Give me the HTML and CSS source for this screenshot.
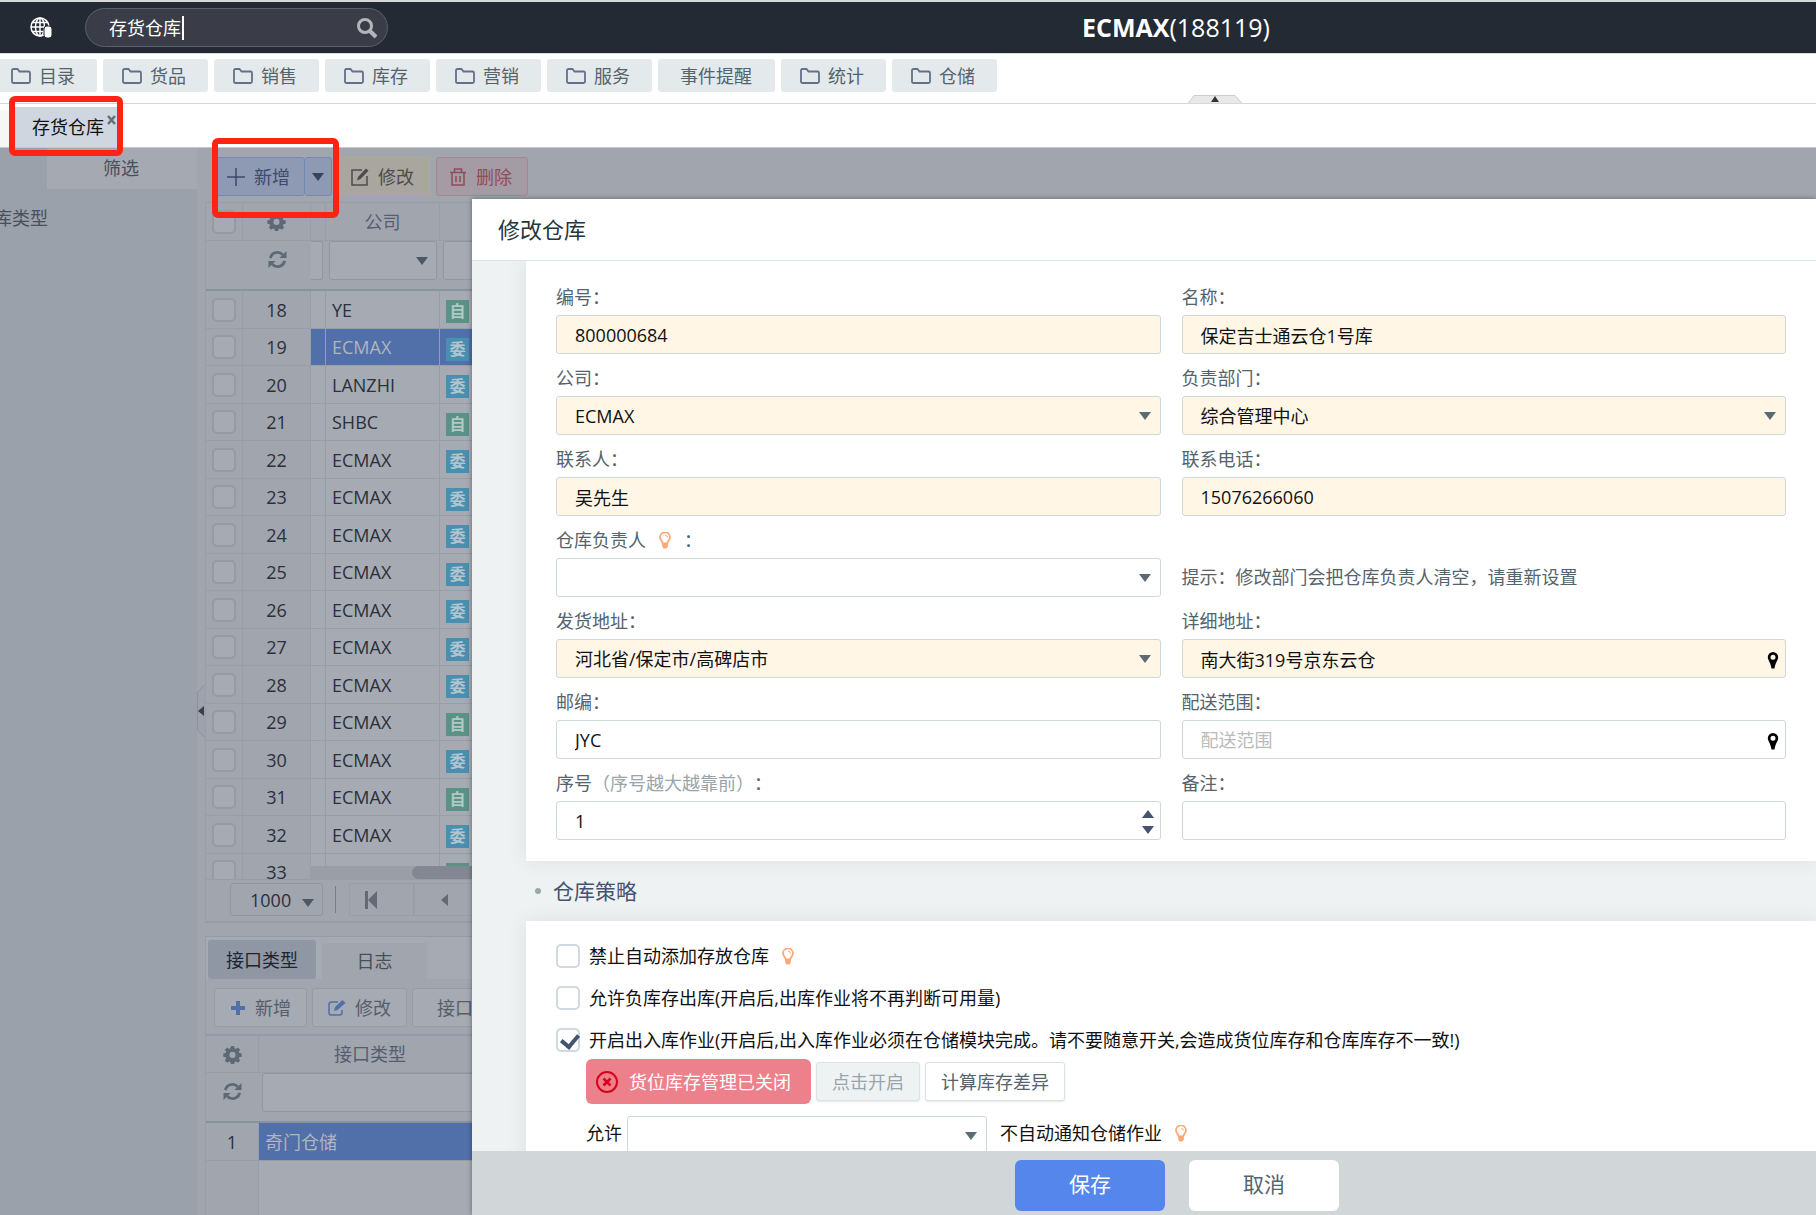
FILE: index.html
```html
<!DOCTYPE html>
<html lang="zh-CN">
<head>
	<meta charset="utf-8">
	<title>存货仓库</title>
	<link rel="stylesheet" href="styles.css">
</head>
<body>
<svg class="sprite" aria-hidden="true">
	<symbol id="i-folder" viewBox="0 0 20 16"><path d="M1 13V2.5Q1 1 2.500 1H6.500L8.500 3.500H17.500Q19 3.500 19 5V13.500Q19 15 17.500 15H2.500Q1 15 1 13.500Z" fill="none" stroke="currentColor" stroke-width="1.800"/></symbol>
	<symbol id="i-gear" viewBox="0 0 20 20"><path fill="currentColor" fill-rule="evenodd" d="M8.300 1h3.400l.5 2.500 1.400.6 2.100-1.500 2.400 2.400-1.500 2.100.6 1.400 2.500.5v3.400l-2.500.5-.6 1.400 1.500 2.100-2.400 2.400-2.100-1.500-1.400.6-.5 2.500H8.300l-.5-2.500-1.400-.6-2.100 1.500-2.400-2.400 1.500-2.100-.6-1.400L.300 12.400V9l2.500-.5.6-1.400L1.900 5l2.400-2.400 2.100 1.500 1.400-.6zM10 7.200a3.200 3.200 0 1 0 0 6.400 3.200 3.200 0 0 0 0-6.400z"/></symbol>
	<symbol id="i-refresh" viewBox="0 0 20 20"><path d="M2.500 8.500A7.600 7.600 0 0 1 15.500 5M17.500 11.500A7.600 7.600 0 0 1 4.500 15" fill="none" stroke="currentColor" stroke-width="3"/><path d="M19.500 1v7.500H12zM.500 19v-7.500H8z" fill="currentColor"/></symbol>
	<symbol id="i-bulb" viewBox="0 0 12 17"><path d="M3.800 11.500C3.800 9 1 8.500 1 5.300A4.700 4.700 0 0 1 11 5.300C11 8.500 8.200 9 8.200 11.500Z" fill="none" stroke="currentColor" stroke-width="1.800"/><path d="M3.200 11h5.600v3.500L7.500 16.500h-3L3.200 14.500z" fill="currentColor"/><path d="M6 3.200Q8.300 3.400 8.500 5.500" fill="none" stroke="currentColor"/></symbol>
	<symbol id="i-pin" viewBox="0 0 12 18"><path fill-rule="evenodd" d="M6 1a5.200 5.200 0 0 1 5.200 5.200C11.200 9 8.500 11 7.500 17.500h-3C3.500 11 .8 9 .8 6.200A5.200 5.200 0 0 1 6 1zm0 2.700a2.500 2.500 0 1 0 0 5 2.500 2.500 0 0 0 0-5z"/></symbol>
</svg>

<header class="top">
	<svg class="globe" viewBox="0 0 22 21" width="22" height="21"><g fill="none" stroke="#fff" stroke-width="1.500"><circle cx="10" cy="10" r="9"/><ellipse cx="10" cy="10" rx="4.500" ry="9"/><path d="M10 1v18M1 10h18M2.500 5.500h15M2.500 14.500h15"/></g><rect x="14" y="9" width="8" height="12" rx="3" fill="#fff" stroke="#232a33"/></svg>
	<div class="search">
		<input type="text" aria-label="搜索" value="存货仓库">
		<i class="caret"></i>
		<button type="button" aria-label="搜索"><svg viewBox="0 0 22 22" width="22" height="22"><circle cx="9" cy="9" r="6.500" fill="none" stroke="currentColor" stroke-width="3"/><path d="M14 14l6 6" stroke="currentColor" stroke-width="4"/></svg></button>
	</div>
	<h1><b>ECMAX</b>(188119)</h1>
</header>

<nav class="menu">
	<button type="button"><svg><use href="#i-folder"/></svg>目录</button>
	<button type="button"><svg><use href="#i-folder"/></svg>货品</button>
	<button type="button"><svg><use href="#i-folder"/></svg>销售</button>
	<button type="button"><svg><use href="#i-folder"/></svg>库存</button>
	<button type="button"><svg><use href="#i-folder"/></svg>营销</button>
	<button type="button"><svg><use href="#i-folder"/></svg>服务</button>
	<button type="button" class="plain">事件提醒</button>
	<button type="button"><svg><use href="#i-folder"/></svg>统计</button>
	<button type="button"><svg><use href="#i-folder"/></svg>仓储</button>
	<svg class="fold" viewBox="0 0 54 8" width="54" height="8"><path d="M.5 8L6 .5h41L53.500 8" fill="#e8e8e8" stroke="#ccc"/><path d="M23 7l4-6 4 6z" fill="#333"/></svg>
</nav>

<div class="tabs">
	<span class="tab-prev"></span>
	<div class="tab on">存货仓库<button type="button" class="close" aria-label="关闭"><svg viewBox="0 0 9 10" width="9" height="10"><path d="M1 1l7 8M8 1L1 9" stroke="#666f76" stroke-width="2.500"/></svg></button></div>
</div>

<div class="work">
	<aside class="side">
		<div class="side-tab">筛选</div>
		<p class="side-type">库类型</p>
	</aside>
	<div class="split"><svg viewBox="0 0 8 54" width="8" height="54"><path d="M8 .5L.5 8v38L8 53.500" fill="#9da2ab" stroke="#8b919a"/><path d="M7 22v10l-6-5z" fill="#3a4048"/></svg></div>
	<main class="main">
		<div class="tools">
			<div class="btn-group">
				<button type="button" class="btn add"><svg viewBox="0 0 18 18"><path d="M9 0v18M0 9h18" stroke="currentColor" stroke-width="1.500"/></svg>新增</button>
				<button type="button" class="btn add more" aria-label="更多"></button>
			</div>
			<button type="button" class="btn edit"><svg viewBox="0 0 18 18"><path d="M11 2H1v15h15V8" fill="none" stroke="currentColor" stroke-width="1.500"/><path d="M6 12.500L7 9l8-8.500 2.500 2.300L9.500 11z" fill="currentColor"/></svg>修改</button>
			<button type="button" class="btn del"><svg viewBox="0 0 18 18"><path d="M1 4.500h16M5.500 4V1h7v3M3 4.500V17h12V4.500M7 8v6M11 8v6" fill="none" stroke="currentColor" stroke-width="1.500"/></svg>删除</button>
		</div>

		<section class="grid">
			<div class="grid-view">
				<table class="list">
					<colgroup><col class="c-chk"><col class="c-num"><col class="c-gap"><col class="c-com"><col></colgroup>
					<thead>
						<tr class="names">
							<th><input type="checkbox" class="chk" aria-label="全选"></th>
							<th><svg class="ico"><use href="#i-gear"/></svg></th>
							<th></th>
							<th>公司</th>
							<th></th>
						</tr>
						<tr class="filters">
							<th></th>
							<th><svg class="ico"><use href="#i-refresh"/></svg></th>
							<th class="cut"><input type="text" aria-label="筛选"></th>
							<th><span class="pick"><select aria-label="公司"><option></option></select></span></th>
							<th><input type="text" aria-label="类型"></th>
						</tr>
					</thead>
					<tbody id="rows"></tbody>
				</table>
				<div class="hbar"><i></i></div>
			</div>
			<div class="pager">
				<span class="pick size"><select aria-label="每页条数"><option>1000</option></select></span>
				<i class="sep"></i>
				<button type="button" aria-label="首页"><svg viewBox="0 0 14 20" width="14" height="20"><path d="M1 1h3v18H1zM13 1v18L4 10z" fill="currentColor"/></svg></button>
				<button type="button" class="prev" aria-label="上一页"><svg viewBox="0 0 14 20" width="14" height="20"><path d="M12 4v12L5 10z" fill="currentColor"/></svg></button>
			</div>
		</section>

		<section class="sub">
			<div class="sub-tabs">
				<button type="button" class="on">接口类型</button>
				<button type="button">日志</button>
			</div>
			<div class="sub-tools">
				<button type="button"><svg viewBox="0 0 18 18"><path d="M9 2v14M2 9h14" stroke="currentColor" stroke-width="4"/></svg>新增</button>
				<button type="button"><svg class="pen" viewBox="0 0 18 18"><path d="M10 3H3.500Q1 3 1 5.500v8Q1 16 3.500 16h8q2.500 0 2.500-2.500V11" fill="none" stroke="currentColor" stroke-width="1.500"/><path d="M6 12l1-4 7.500-7 3 3-8 7z" fill="currentColor"/></svg>修改</button>
				<button type="button" class="wide">接口配置</button>
			</div>
			<table class="list types">
				<colgroup><col class="c-idx"><col class="c-type"><col></colgroup>
				<thead>
					<tr class="names">
						<th><svg class="ico"><use href="#i-gear"/></svg></th>
						<th>接口类型</th>
						<th></th>
					</tr>
					<tr class="filters">
						<th><svg class="ico"><use href="#i-refresh"/></svg></th>
						<th><input type="text" aria-label="接口类型"></th>
						<th></th>
					</tr>
				</thead>
				<tbody>
					<tr class="sel"><td>1</td><td>奇门仓储</td><td></td></tr>
					<tr class="rest"><td></td><td></td><td></td></tr>
				</tbody>
			</table>
		</section>
	</main>
</div>

<!-- 修改仓库 弹窗 -->
<form class="dialog" role="dialog" aria-labelledby="dlg-title">
	<h2 class="dlg-title" id="dlg-title">修改仓库</h2>
	<div class="dlg-con">
		<div class="card fields">
			<div class="field">
				<label for="code">编号：</label>
				<input type="text" id="code" class="must" value="800000684">
			</div>
			<div class="field">
				<label for="name">名称：</label>
				<input type="text" id="name" class="must" value="保定吉士通云仓1号库">
			</div>
			<div class="field">
				<label for="company">公司：</label>
				<span class="pick"><select id="company" class="must"><option>ECMAX</option></select></span>
			</div>
			<div class="field">
				<label for="dept">负责部门：</label>
				<span class="pick"><select id="dept" class="must"><option>综合管理中心</option></select></span>
			</div>
			<div class="field">
				<label for="contact">联系人：</label>
				<input type="text" id="contact" class="must" value="吴先生">
			</div>
			<div class="field">
				<label for="phone">联系电话：</label>
				<input type="text" id="phone" class="must" value="15076266060">
			</div>
			<div class="field">
				<label for="owner">仓库负责人<svg class="bulb"><use href="#i-bulb"/></svg>：</label>
				<span class="pick"><select id="owner"><option></option></select></span>
			</div>
			<div class="field">
				<p class="tip">提示：修改部门会把仓库负责人清空，请重新设置</p>
			</div>
			<div class="field">
				<label for="area">发货地址：</label>
				<span class="pick"><select id="area" class="must"><option>河北省/保定市/高碑店市</option></select></span>
			</div>
			<div class="field">
				<label for="addr">详细地址：</label>
				<span class="pin"><input type="text" id="addr" class="must" value="南大街319号京东云仓"><svg><use href="#i-pin"/></svg></span>
			</div>
			<div class="field">
				<label for="zip">邮编：</label>
				<input type="text" id="zip" value="JYC">
			</div>
			<div class="field">
				<label for="range">配送范围：</label>
				<span class="pin"><input type="text" id="range" placeholder="配送范围"><svg><use href="#i-pin"/></svg></span>
			</div>
			<div class="field">
				<label for="sort">序号<em>（序号越大越靠前）</em>：</label>
				<span class="spin"><input type="number" id="sort" value="1"></span>
			</div>
			<div class="field">
				<label for="memo">备注：</label>
				<input type="text" id="memo">
			</div>
		</div>

		<h3 class="group">仓库策略</h3>

		<div class="card policy">
			<label class="opt"><input type="checkbox" class="chk">禁止自动添加存放仓库<svg class="bulb"><use href="#i-bulb"/></svg></label>
			<label class="opt"><input type="checkbox" class="chk">允许负库存出库(开启后,出库作业将不再判断可用量)</label>
			<label class="opt"><input type="checkbox" class="chk" checked>开启出入库作业(开启后,出入库作业必须在仓储模块完成。请不要随意开关,会造成货位库存和仓库库存不一致!)</label>
			<div class="acts">
				<span class="closed"><svg viewBox="0 0 22 22" width="22" height="22"><circle cx="11" cy="11" r="10" fill="none" stroke="currentColor" stroke-width="2"/><path d="M7.500 7.500l7 7M14.500 7.500l-7 7" stroke="currentColor" stroke-width="2.500"/></svg>货位库存管理已关闭</span>
				<button type="button" disabled>点击开启</button>
				<button type="button">计算库存差异</button>
			</div>
			<div class="allow">
				<label for="allow">允许</label>
				<span class="pick"><select id="allow"><option></option></select></span>
				<span>不自动通知仓储作业</span><svg class="bulb"><use href="#i-bulb"/></svg>
			</div>
		</div>
	</div>
	<div class="dlg-foot">
		<button type="submit" class="ok">保存</button>
		<button type="button">取消</button>
	</div>
</form>

<i class="mark mark-tab"></i>
<i class="mark mark-add"></i>

<script>
	// 仓库列表：公司 + 类型（自营 / 委外）
	var data = [
		['YE','自'],['ECMAX','委'],['LANZHI','委'],['SHBC','自'],['ECMAX','委'],['ECMAX','委'],
		['ECMAX','委'],['ECMAX','委'],['ECMAX','委'],['ECMAX','委'],['ECMAX','委'],['ECMAX','自'],
		['ECMAX','委'],['ECMAX','自'],['ECMAX','委'],['','自']
	];
	var arr = [];
	for(var i=0;i<data.length;i++){
		var no = i + 18;
		arr.push(`
			<tr class="${no === 19 ? 'sel':''}">
				<td><input type="checkbox" class="chk" aria-label="选择${no}"></td>
				<td>${no}</td>
				<td></td>
				<td>${data[i][0]}</td>
				<td><span class="badge ${data[i][1] === '自' ? 'own':''}">${data[i][1]}</span></td>
			</tr>
		`);
	}
	document.getElementById('rows').innerHTML = arr.join('');
</script>
</body>
</html>
```
FILE: styles.css
```css
*{
	box-sizing: border-box;
}
body{
	margin: 0;
	height: 100vh;
	display: flex;
	flex-direction: column;
	overflow: hidden;
	position: relative;
	background: #fff;
	color: #55636b;
	font: 18px/24px "Open Sans","Noto Sans CJK SC",sans-serif;
}
h1,h2,h3,p{
	margin: 0;
	font-weight: normal;
}
button,input,select{
	font: inherit;
	color: inherit;
	margin: 0;
	padding: 0;
	outline: none;
}
button{
	border: 0;
	background: none;
	white-space: nowrap;
}
svg{
	display: block;
	flex: none;
}
em,i{
	font-style: normal;
}
.sprite{
	position: absolute;
	width: 0;
	height: 0;
}

/* 顶部 */
.top{
	display: flex;
	align-items: center;
	height: 54px;
	flex: none;
	padding-left: 30px;
	border-top: 2px solid #d6dadb;
	border-bottom: 1px solid #d5dde0;
	background: #232a33;
	color: #fff;
}
.search{
	display: flex;
	align-items: center;
	width: 303px;
	height: 39px;
	margin-left: 33px;
	padding: 0 9px 0 23px;
	border: 1px solid #5a6070;
	border-radius: 20px;
	background: #3a3d48;
}
.search input{
	width: 73px;
	border: 0;
	background: none;
}
.caret{
	width: 2px;
	height: 24px;
	background: #fff;
}
.search button{
	margin-left: auto;
	color: #b3b5b9;
}
.top h1{
	margin-left: 694px;
	padding-bottom: 2px;
	font-size: 25px;
}

/* 菜单 */
.menu{
	display: flex;
	gap: 6px;
	flex: none;
	height: 50px;
	padding-top: 5px;
	margin-left: -8px;
	border-bottom: 1px solid #cfdada;
	position: relative;
}
.menu button{
	display: flex;
	align-items: center;
	gap: 8px;
	height: 33px;
	padding: 0 22px 0 19px;
	border-radius: 3px;
	background: #e4e9eb;
}
.menu button svg{
	width: 20px;
	height: 16px;
	color: #64708a;
}
.menu .plain{
	padding: 0 23px 0 22px;
}
.fold{
	position: absolute;
	left: 1196px;
	bottom: 0;
}

/* 标签页 */
.tabs{
	display: flex;
	align-items: flex-end;
	gap: 5px;
	flex: none;
	height: 44px;
	border-bottom: 1px solid #c3c8cc;
}
.tab-prev{
	width: 9px;
	height: 37px;
	background: #f5f7f7;
}
.tab{
	display: flex;
	height: 40px;
	padding: 0 2px 0 18px;
	line-height: 40px;
	background: #cfd6e0;
	color: #111;
}
.close{
	align-self: flex-start;
	margin: 8px 0 0 3px;
}

/* 工作区 */
.work{
	display: flex;
	flex: 1;
	min-height: 0;
	background: #a1a5ae;
}
.side{
	flex: none;
	width: 197px;
	overflow: hidden;
	background: #9aa1aa;
	color: #48505b;
}
.side-tab{
	height: 41px;
	margin-left: 47px;
	padding-right: 2px;
	line-height: 40px;
	text-align: center;
	background: #a5a9b2;
}
.side-type{
	margin: 17px 0 0 -6px;
}
.split{
	display: flex;
	align-items: center;
	flex: none;
	width: 8px;
	padding-top: 58px;
}
.main{
	display: flex;
	flex-direction: column;
	flex: 1;
	min-width: 0;
}
.tools{
	display: flex;
	gap: 6px;
	height: 54px;
	flex: none;
	padding: 9px 0 0 10px;
}
.btn-group{
	display: flex;
}
.btn{
	display: flex;
	align-items: center;
	gap: 9px;
	height: 39px;
	padding: 0 15px 0 12px;
	border: 1px solid;
	border-radius: 3px;
}
.btn svg{
	width: 18px;
	height: 18px;
}
.add{
	padding: 0 14px 0 11px;
	border-color: #7588b4;
	background: #8e99b3;
	color: #3c4a6c;
}
.more{
	width: 27px;
	padding: 0 7px;
	border-left: 0;
}
.more::after{
	content: "";
	border: 6px solid transparent;
	border-top: 8px solid #39435a;
	border-bottom: 0;
}
.edit{
	border-color: #b1a98b;
	background: #a8a69f;
	color: #4c4b4e;
}
.del{
	border-color: #a8868f;
	background: #a59ba4;
	color: #8f4c5b;
}

/* 表格 */
.grid{
	display: flex;
	flex-direction: column;
	flex: 1;
	min-height: 0;
	border: 1px solid #979ea9;
	border-width: 1px 0 2px 1px;
}
.grid-view{
	flex: 1;
	min-height: 0;
	overflow: hidden;
	position: relative;
}
.list{
	width: 100%;
	table-layout: fixed;
	border-collapse: separate;
	border-spacing: 0;
}
.c-chk{
	width: 37px;
}
.c-num{
	width: 68px;
}
.c-gap{
	width: 15px;
}
.c-com{
	width: 114px;
}
.list th,.list td{
	padding: 0;
	border: 1px solid #979ea9;
	border-width: 0 1px 1px 0;
	font-weight: normal;
}
.names th{
	height: 38px;
	color: #555d70;
}
.types .names th{
	height: 37px;
}
.filters th{
	height: 50px;
	padding: 0 3px;
	border-right: 0;
	border-bottom: 2px solid #87949c;
	vertical-align: top;
}
.filters .ico{
	margin-top: 9px;
}
.filters input,.filters select{
	display: block;
	width: 100%;
	height: 39px;
	border: 1px solid #8f97a3;
	border-radius: 3px;
	background: #a6aab3;
}
.filters .cut{
	padding-left: 0;
}
.filters .cut input{
	border-left: 0;
	border-radius: 0 3px 3px 0;
}
.ico{
	width: 19px;
	height: 19px;
	margin: 0 auto;
	color: #5d6a76;
}
.list td{
	height: 37px;
	background: #a6aab3;
	color: #2b303b;
}
.list tbody tr:nth-child(odd) td{
	height: 38px;
}
.list td:nth-child(-n+2){
	text-align: center;
	background: #a1a5ae;
}
.list td:nth-child(n+4){
	padding-left: 6px;
}
.list .sel td:nth-child(n+3){
	background: #516fa9;
	color: #b0b5bf;
}
.chk{
	display: block;
	appearance: none;
	width: 24px;
	height: 24px;
	margin: 0 auto;
	border: 2px solid #949ba5;
	border-radius: 5px;
	background: #a6aab3;
}
.badge{
	display: block;
	width: 23px;
	height: 23px;
	margin-top: 4px;
	line-height: 22px;
	text-align: center;
	font-size: 16px;
	font-weight: bold;
	background: #4990b0;
	color: #b3c6d0;
}
.own{
	background: #5a9385;
	color: #b1c8c4;
}
.hbar{
	position: absolute;
	left: 105px;
	right: 0;
	bottom: 0;
	height: 13px;
	background: #9a9ea7;
}
.hbar i{
	display: block;
	height: 13px;
	margin-left: 101px;
	border-radius: 7px;
	background: #828792;
}
.pager{
	display: flex;
	align-items: center;
	flex: none;
	height: 42px;
	padding: 0 0 2px 24px;
	border-top: 1px solid #979ea9;
	color: #626a78;
}
.size{
	width: 93px;
	height: 33px;
	color: #2b303b;
}
.size select{
	width: 100%;
	height: 33px;
	padding-left: 19px;
	border: 1px solid #8f97a3;
	border-radius: 3px;
	background: #a1a5ae;
}
.sep{
	width: 1px;
	height: 27px;
	margin: 0 13px 0 12px;
	background: #767d89;
}
.pager button{
	width: 65px;
	height: 33px;
	padding-left: 14px;
	border: 1px solid #999fa9;
}
.pager .prev{
	padding-left: 21px;
}

/* 下方面板 */
.sub{
	flex: none;
	height: 279px;
	margin-top: 13px;
	border-top: 1px solid #939ba6;
	border-left: 1px solid #979ea9;
	overflow: hidden;
}
.sub-tabs{
	display: flex;
	align-items: flex-end;
	gap: 6px;
	height: 42px;
	padding-left: 2px;
	background: #a6aab3;
}
.sub-tabs button{
	width: 105px;
	height: 36px;
	background: #a1a5ae;
	color: #474e5b;
}
.sub-tabs .on{
	width: 108px;
	height: 39px;
	border-radius: 3px;
	background: #8f97a5;
	color: #1f242e;
}
.sub-tools{
	display: flex;
	gap: 5px;
	height: 57px;
	padding: 9px 0 0 8px;
	border-bottom: 2px solid #939ca8;
}
.sub-tools button{
	display: flex;
	align-items: center;
	gap: 8px;
	height: 39px;
	padding: 0 15px 0 14px;
	border: 1px solid #959ca7;
	border-radius: 3px;
	background: #a6aab3;
	color: #555e6b;
}
.sub-tools svg{
	width: 18px;
	height: 18px;
	color: #516fa9;
}
.sub-tools .pen{
	width: 20px;
}
.sub-tools .wide{
	padding: 0 24px;
}
.c-idx{
	width: 53px;
}
.c-type{
	width: 223px;
}
.types td:nth-child(2){
	text-align: left;
	padding-left: 6px;
}
.types .sel td:nth-child(n+2){
	background: #516fa9;
	color: #b0b5bf;
}
.types .rest td{
	height: 80px;
}
.types .rest td:nth-child(2){
	background: #a6aab3;
}

/* 下拉 */
.pick,.pin,.spin{
	display: block;
	position: relative;
}
.pick select{
	display: block;
	appearance: none;
	width: 100%;
}
.pick::after{
	content: "";
	position: absolute;
	right: 10px;
	top: 16px;
	border: 6px solid transparent;
	border-top: 8px solid #5c6b73;
	border-bottom: 0;
	pointer-events: none;
}
.filters .pick::after,.size::after{
	right: 9px;
	border-top-color: #4d5866;
}

/* 弹窗 */
.dialog{
	position: absolute;
	left: 472px;
	top: 199px;
	right: 0;
	bottom: 0;
	display: flex;
	flex-direction: column;
	background: #eef2f3;
	box-shadow: 0 0 5px rgba(0,0,0,.4);
}
.dlg-title{
	flex: none;
	height: 62px;
	padding-left: 26px;
	line-height: 61px;
	font-size: 22px;
	background: #fff;
	color: #26343e;
	border-bottom: 1px solid #dbe4e6;
}
.dlg-con{
	flex: 1;
	min-height: 0;
	padding-left: 54px;
	overflow: hidden;
}
.card{
	background: #fff;
	box-shadow: 0 0 20px rgba(0,0,0,.08);
}
.fields{
	display: grid;
	grid-template-columns: 1fr 1fr;
	gap: 6px 21px;
	padding: 18px 30px 21px;
}
.field label{
	display: flex;
	align-items: center;
	height: 36px;
}
.field em{
	color: #98a5ab;
}
.card input:not(.chk),.card select{
	display: block;
	width: 100%;
	height: 39px;
	padding: 0 18px;
	border: 1px solid #cdd8db;
	border-radius: 3px;
	background: #fff;
	color: #111;
}
.card input.must,.card select.must{
	background: #fff6e6;
}
.card input::placeholder{
	color: #bbb;
}
.bulb{
	width: 12px;
	height: 17px;
	margin: 0 13px;
	color: #ffa775;
}
.tip{
	padding-top: 36px;
	line-height: 39px;
}
.pin svg{
	position: absolute;
	right: 7px;
	top: 12px;
	width: 12px;
	height: 18px;
	color: #000;
}
.spin input{
	appearance: textfield;
}
.spin input::-webkit-inner-spin-button{
	display: none;
}
.spin::before,.spin::after{
	content: "";
	position: absolute;
	right: 7px;
	border: 6px solid transparent;
}
.spin::before{
	top: 9px;
	border-top: 0;
	border-bottom: 8px solid #46536e;
}
.spin::after{
	bottom: 6px;
	border-bottom: 0;
	border-top: 8px solid #46536e;
}
.group{
	display: flex;
	align-items: center;
	gap: 12px;
	height: 60px;
	padding-left: 9px;
	font-size: 21px;
	color: #46536e;
}
.group::before{
	content: "";
	width: 6px;
	height: 6px;
	border-radius: 50%;
	background: #9aa8ae;
}
.policy{
	display: flex;
	flex-direction: column;
	gap: 18px;
	padding: 23px 30px;
	color: #111;
}
.opt{
	display: flex;
	align-items: center;
	height: 24px;
	white-space: nowrap;
}
.opt .chk{
	margin: 0 9px 0 0;
	border-color: #d0d9dc;
	background: #fff;
}
.opt .chk:checked::before{
	content: "";
	display: block;
	width: 8px;
	height: 13px;
	margin: 1px 0 0 6px;
	border: solid #46536e;
	border-width: 0 4px 4px 0;
	transform: rotate(40deg);
}
.acts{
	display: flex;
	align-items: center;
	gap: 5px;
	margin: -11px 0 -6px 30px;
}
.closed{
	display: flex;
	align-items: center;
	gap: 11px;
	height: 45px;
	padding: 0 20px 0 10px;
	border-radius: 6px;
	background: #ec818c;
	color: #fff;
}
.closed svg{
	color: #d9001b;
}
.acts button{
	height: 39px;
	padding: 0 15px;
	border: 1px solid #dbe3e5;
	border-radius: 3px;
	background: #fff;
	color: #55636b;
	box-shadow: 0 1px 2px rgba(0,0,0,.1);
}
.acts button:disabled{
	background: #eef2f3;
	color: #98a5ab;
}
.allow{
	display: flex;
	align-items: flex-start;
	margin-left: 30px;
	line-height: 35px;
}
.allow .pick{
	width: 360px;
	margin: 0 13px 0 5px;
}
.allow .bulb{
	margin-top: 9px;
}
.dlg-foot{
	display: flex;
	justify-content: center;
	gap: 24px;
	flex: none;
	height: 64px;
	padding: 9px 0 0 66px;
	background: #d1d6d8;
	z-index: 1;
}
.dlg-foot button{
	width: 150px;
	height: 51px;
	padding-bottom: 3px;
	border-radius: 6px;
	font-size: 21px;
	background: #fff;
}
.dlg-foot .ok{
	background: #5486eb;
	color: #fff;
}

/* 红框标注 */
.mark{
	position: absolute;
	border: 6px solid #ff2314;
	border-radius: 6px;
}
.mark-tab{
	left: 9px;
	top: 96px;
	width: 114px;
	height: 60px;
}
.mark-add{
	left: 212px;
	top: 138px;
	width: 127px;
	height: 80px;
}
```
